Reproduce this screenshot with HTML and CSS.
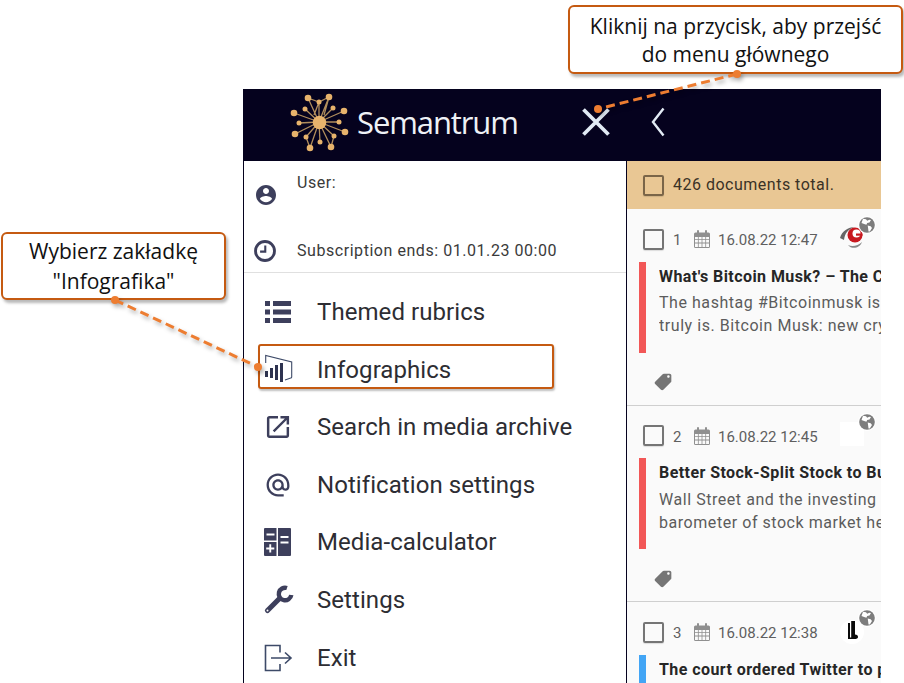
FILE: index.html
```html
<!DOCTYPE html>
<html lang="en">
<head>
<meta charset="utf-8">
<title>Semantrum</title>
<link rel="stylesheet" href="styles.css">
</head>
<body>
<svg width="0" height="0" class="defs">
  <defs>
    <symbol id="cal" viewBox="0 0 16 18">
      <path fill="#8f8f8f" d="M1.500 2.500H3V1a1 1 0 0 1 2 0v1.500h6V1a1 1 0 0 1 2 0v1.500h1.500A1.500 1.500 0 0 1 16 4v12.500a1.500 1.500 0 0 1-1.500 1.500h-13A1.500 1.500 0 0 1 0 16.500V4a1.500 1.500 0 0 1 1.500-1.500zM1 7v2.300h2.900V7zm3.700 0v2.300h2.900V7zm3.700 0v2.300h2.900V7zm3.700 0v2.300H15V7zM1 10.100v2.500h2.900v-2.500zm3.700 0v2.500h2.900v-2.500zm3.700 0v2.500h2.900v-2.500zm3.700 0v2.500H15v-2.500zM1 13.400V17h2.900v-3.600zm3.700 0V17h2.900v-3.600zm3.700 0V17h2.900v-3.600zm3.700 0V17H15v-3.600z"/>
    </symbol>
    <symbol id="tag" viewBox="0 0 24 24">
      <path fill="#757575" transform="matrix(-1 0 0 1 24 0)" d="M21.410 11.580l-9-9C12.050 2.220 11.550 2 11 2H4c-1.100 0-2 .9-2 2v7c0 .55.22 1.050.59 1.420l9 9c.36.36.86.58 1.410.58.55 0 1.050-.22 1.410-.59l7-7c.37-.36.59-.86.59-1.410 0-.55-.23-1.060-.59-1.420zM5.500 7C4.670 7 4 6.330 4 5.500S4.670 4 5.500 4 7 4.670 7 5.500 6.330 7 5.500 7z"/>
    </symbol>
    <symbol id="globe" viewBox="0 0 18 18">
      <circle cx="9" cy="9" r="9" fill="#fff"/>
      <circle cx="9" cy="9" r="7.800" fill="#7d7d7d"/>
      <path fill="#fff" d="M5 2.800l3 .4 1.200 1.500 2-.9 1.800.2-1.500 2.400-2.300.6-.8 1.800-2.300-.9L3.500 7zM9.700 9.500l3 .8 1.300 1.800-2.200 3.300-1.300.1-.4-3.200z"/>
    </symbol>
  </defs>
</svg>

<div class="app">
  <header class="topbar">
    <div class="brand">
      <svg class="logo" viewBox="0 0 80 75" width="80" height="75">
        <g stroke="#b08d5c" stroke-width="1.300" fill="none">
          <path d="M39 37L28 13M39 37L49 12M39 37L64 26M39 37L65 47M39 37L51 62M39 37L30 63M39 37L15 49M39 37L14 28M39 37L39 17M39 37L25 24M39 37L53 23M39 37L59 37M39 37L54 51M39 37L40 57M39 37L26 52M39 37L19 38M28 13L39 17L49 12M39 17L34 30M49 12L44 30M54 51L51 62M26 52L30 63"/>
        </g>
        <g fill="#e7b36c">
          <circle cx="28" cy="13" r="3.300"/><circle cx="49" cy="12" r="3.300"/><circle cx="64" cy="26" r="3.300"/><circle cx="65" cy="47" r="3.300"/><circle cx="51" cy="62" r="3.300"/><circle cx="30" cy="63" r="3.300"/><circle cx="15" cy="49" r="3.300"/><circle cx="14" cy="28" r="3.300"/>
          <circle cx="39" cy="17" r="2.500"/><circle cx="25" cy="24" r="2.500"/><circle cx="53" cy="23" r="2.500"/><circle cx="59" cy="37" r="2.500"/><circle cx="54" cy="51" r="2.500"/><circle cx="40" cy="57" r="2.500"/><circle cx="26" cy="52" r="2.500"/><circle cx="19" cy="38" r="2.500"/>
          <circle cx="39.500" cy="37.500" r="6.800"/>
        </g>
      </svg>
      <span class="brand-name">Semantrum</span>
      <svg class="close" viewBox="0 0 28 28" width="28" height="28"><path d="M1.500 1.500l25 25M26.500 1.500l-25 25" stroke="#e2ebf5" stroke-width="3.800" fill="none"/></svg>
    </div>
    <svg class="back" viewBox="0 0 14 30" width="14" height="30"><path d="M12.500 1.500L2 15l10.500 13.500" stroke="#e2ebf5" stroke-width="2.400" fill="none"/></svg>
  </header>

  <div class="body">
    <aside class="side">
      <section class="account">
        <div class="acc-row acc-user">
          <svg class="acc-icon acc-person" viewBox="0 0 24 24" width="24" height="24"><path fill="#3d3f5c" d="M12 2C6.480 2 2 6.480 2 12s4.480 10 10 10 10-4.480 10-10S17.520 2 12 2zm0 3c1.660 0 3 1.340 3 3s-1.340 3-3 3-3-1.340-3-3 1.340-3 3-3zm0 14.200c-2.500 0-4.710-1.280-6-3.220.03-1.990 4-3.080 6-3.080 1.990 0 5.970 1.090 6 3.080-1.290 1.940-3.500 3.220-6 3.220z"/></svg>
          <span class="acc-text">User:</span>
        </div>
        <div class="acc-row acc-sub">
          <svg class="acc-icon" viewBox="1 1 22 22" width="24" height="24"><circle cx="12" cy="12" r="8.700" fill="none" stroke="#3d3f5c" stroke-width="2.600"/><path fill="#3d3f5c" d="M11.300 7h1.900v6.500H7.500v-1.900h3.800z"/></svg>
          <span class="acc-text">Subscription ends: 01.01.23 00:00</span>
        </div>
      </section>
      <nav class="menu">
        <a class="item">
          <svg class="ico" viewBox="0 0 32 32" width="32" height="32"><path fill="#3d3f5c" d="M3 5h5v5H3zM11 5h18v5H11zM3 13.500h5v5H3zM11 13.500h18v5H11zM3 22h5v5H3zM11 22h18v5H11z"/></svg>
          <span>Themed rubrics</span>
        </a>
        <a class="item">
          <svg class="ico" viewBox="0 0 32 32" width="32" height="32">
            <path d="M3.700 9V1.500L29.700 8v15a1 1 0 0 1-1 1L23 26" stroke="#3d4a68" stroke-width="1.100" fill="none"/>
            <path fill="#2e3350" d="M3 17h3v6H3zM8 14h3v10H8zM13 11h3v15h-3zM18 9h3v19h-3z"/>
          </svg>
          <span>Infographics</span>
        </a>
        <a class="item">
          <svg class="ico" viewBox="-1 -1 26 26" width="32" height="32"><path fill="#3d3f5c" d="M19 19H5V5h7V3H5c-1.110 0-2 .9-2 2v14c0 1.100.89 2 2 2h14c1.100 0 2-.9 2-2v-7h-2v7zM14 3v2h3.590l-9.830 9.830 1.410 1.410L19 6.410V10h2V3h-7z"/></svg>
          <span>Search in media archive</span>
        </a>
        <a class="item">
          <svg class="ico" viewBox="-2 -2 28 28" width="32" height="32"><path fill="#3d3f5c" d="M12 2C6.480 2 2 6.480 2 12s4.480 10 10 10h5v-2h-5c-4.340 0-8-3.660-8-8s3.660-8 8-8 8 3.660 8 8v1.430c0 .79-.71 1.570-1.500 1.570s-1.500-.78-1.500-1.570V12c0-2.760-2.240-5-5-5s-5 2.240-5 5 2.240 5 5 5c1.380 0 2.640-.56 3.540-1.470.65.89 1.770 1.470 2.960 1.470 1.970 0 3.500-1.600 3.500-3.570V12c0-5.520-4.480-10-10-10zm0 13c-1.660 0-3-1.340-3-3s1.340-3 3-3 3 1.340 3 3-1.340 3-3 3z"/></svg>
          <span>Notification settings</span>
        </a>
        <a class="item">
          <svg class="ico" viewBox="0 0 32 32" width="32" height="32"><path fill="#3d3f5c" fill-rule="evenodd" d="M3 2h11.500v12.500H2V3a1 1 0 0 1 1-1zM4.500 7.500v1.900h8V7.500zM2 16h12.500v14H3a1 1 0 0 1-1-1zM7.300 18.300v3.200H4.200v1.900h3.100v3.200h1.900v-3.200h3.100v-1.900H9.200v-3.200zM16 2h12a1 1 0 0 1 1 1v26a1 1 0 0 1-1 1H16zM18.500 10v1.900h8V10zM18.500 15.500v1.900h8v-1.900z"/></svg>
          <span>Media-calculator</span>
        </a>
        <a class="item">
          <svg class="ico" viewBox="0 0 32 32" width="32" height="32"><path d="M25 4A6.300 6.300 0 1 0 29.300 11" stroke="#3d3f5c" stroke-width="4.400" fill="none"/><path d="M5.500 26.500L17.500 14.500" stroke="#3d3f5c" stroke-width="5.200" stroke-linecap="round" fill="none"/><circle cx="5.500" cy="26.500" r="1" fill="#fff"/></svg>
          <span>Settings</span>
        </a>
        <a class="item">
          <svg class="ico" viewBox="0 0 32 32" width="32" height="32"><path d="M18 10.500V3.500H3.500v25H18V22M9 16h19M23 10.500l6 5.500-6 5.500" stroke="#3d4a68" stroke-width="1.600" fill="none"/></svg>
          <span>Exit</span>
        </a>
      </nav>
    </aside>

    <main class="list">
      <div class="total"><span class="check check-total"></span><span class="total-text">426 documents total.</span></div>

      <article class="doc">
        <svg class="globe"><use href="#globe"/></svg>
        <svg class="src" viewBox="0 0 26 26" width="26" height="26">
          <path d="M0 13C2 6 8 2 15 2 8 4 5 8 4 15z" fill="#666"/>
          <circle cx="15" cy="10" r="7.500" fill="#c8181f"/>
          <circle cx="16.500" cy="8.500" r="4" fill="#fff"/>
          <path d="M16 8.500h6.500v2.200H16z" fill="#c8181f"/>
          <path d="M8 20c4 2 10 1 14-3-2 6-10 8-14 3z" fill="#888"/>
        </svg>
        <div class="doc-head"><span class="check"></span><span class="num">1</span><svg class="cal"><use href="#cal"/></svg><span class="date">16.08.22 12:47</span></div>
        <div class="doc-main">
          <div class="bar bar-red"></div>
          <div class="doc-text">
            <h3 class="title">What's Bitcoin Musk? – The Coin Everyone Talks About</h3>
            <p class="line">The hashtag #Bitcoinmusk is trending and nobody knows what it</p>
            <p class="line">truly is. Bitcoin Musk: new crypto or just a meme?</p>
          </div>
        </div>
        <svg class="tag"><use href="#tag"/></svg>
      </article>

      <article class="doc">
        <svg class="globe"><use href="#globe"/></svg>
        <div class="src src-blank"></div>
        <div class="doc-head"><span class="check"></span><span class="num">2</span><svg class="cal"><use href="#cal"/></svg><span class="date">16.08.22 12:45</span></div>
        <div class="doc-main">
          <div class="bar bar-red"></div>
          <div class="doc-text">
            <h3 class="title">Better Stock-Split Stock to Buy Right Now</h3>
            <p class="line">Wall Street and the investing community treat the S&amp;P 500 as a</p>
            <p class="line">barometer of stock market health and direction of the economy</p>
          </div>
        </div>
        <svg class="tag"><use href="#tag"/></svg>
      </article>

      <article class="doc">
        <svg class="globe"><use href="#globe"/></svg>
        <svg class="src" viewBox="0 0 26 26" width="26" height="26">
          <circle cx="12" cy="14" r="12" fill="#fff"/>
          <path d="M8 5h2v15H8zM11.200 3H15v13.500c2 0 3 1 3 2.400S16.500 21 14.500 21H8v-1.500h3.200z" fill="#0a0a0a"/>
        </svg>
        <div class="doc-head"><span class="check"></span><span class="num">3</span><svg class="cal"><use href="#cal"/></svg><span class="date">16.08.22 12:38</span></div>
        <div class="doc-main">
          <div class="bar bar-blue"></div>
          <div class="doc-text">
            <h3 class="title">The court ordered Twitter to provide documents</h3>
          </div>
        </div>
      </article>
    </main>
  </div>
</div>

<div class="callout callout-top">Kliknij na przycisk, aby przejść<br>do menu głównego</div>
<div class="callout callout-left">Wybierz zakładkę<br>"Infografika"</div>
<div class="highlight"></div>
<svg class="connectors" viewBox="0 0 904 683" width="904" height="683">
  <g class="conn">
    <path d="M737 74L598 109" />
    <path d="M115 300L258 367" />
  </g>
  <g class="dots">
    <circle cx="737" cy="74" r="4"/><circle cx="598" cy="109" r="4"/>
    <circle cx="115" cy="300" r="4"/><circle cx="258" cy="367" r="4"/>
  </g>
</svg>
</body>
</html>
```
FILE: styles.css
```css
* { box-sizing: border-box; }
html, body { margin: 0; padding: 0; }
body {
  width: 904px;
  height: 683px;
  overflow: hidden;
  background: #fff;
  padding: 89px 0 0 243px;
  position: relative;
  font-family: Roboto, "Liberation Sans", sans-serif;
}
.defs { position: absolute; }

.app { width: 638px; height: 594px; display: flex; flex-direction: column; }

.topbar {
  height: 72px;
  flex: none;
  background: #05021e;
  display: flex;
  align-items: center;
  padding-bottom: 6px;
}
.brand { width: 384px; display: flex; align-items: center; padding-left: 37px; }
.logo { flex: none; }
.brand-name {
  font-family: "Open Sans", "Noto Sans", sans-serif;
  font-size: 31px;
  font-weight: 500;
  line-height: 40px;
  color: #eef1f6;
  margin-left: -3px;
  letter-spacing: -1.1px;
}
.close { margin-left: 64px; flex: none; }
.back { margin-left: 24px; flex: none; }

.body { flex: 1; display: flex; min-height: 0; }

.side {
  width: 384px;
  flex: none;
  border-left: 1px solid #05021e;
  border-right: 1px solid #05021e;
  background: #fff;
  overflow: hidden;
}
.account { height: 112px; border-bottom: 1px solid #e0e0e0; }
.acc-row { display: flex; color: #3a3a3a; font-size: 16px; letter-spacing: .55px; padding-left: 9px; }
.acc-icon { flex: none; }
.acc-person { margin-left: 1px; margin-right: -1px; }
.acc-text { margin-left: 20px; }
.acc-user { height: 68px; align-items: center; }
.acc-user .acc-text { align-self: flex-start; margin-top: 12px; line-height: 20px; }
.acc-sub { height: 43px; align-items: center; }

.menu { padding: 10.2px 0 0 18px; }
.item {
  height: 57.6px;
  display: flex;
  align-items: center;
  gap: 23px;
  font-size: 24px;
  letter-spacing: .07px;
  color: #2d2d33;
}
.ico { flex: none; }

.list { width: 254px; flex: none; overflow: hidden; background: #fafafa; }
.total {
  height: 48px;
  background: #e9c794;
  display: flex;
  align-items: center;
  padding-left: 16px;
  gap: 9px;
  font-size: 16px;
  letter-spacing: .5px;
  color: #3a3226;
}
.total-text { position: relative; top: -1px; }
.check {
  width: 21px;
  height: 21px;
  flex: none;
  border: 2px solid #757575;
  border-radius: 2px;
  box-shadow: 0 1px 1px rgba(0,0,0,.12);
}
.check-total { border-color: #7a6548; }

.doc {
  height: 196.5px;
  padding-top: 18px;
  border-bottom: 1px solid #cfcfcf;
  position: relative;
}
.doc-head { height: 24px; display: flex; align-items: center; padding-left: 16px; color: #5f5f5f; font-size: 15px; }
.num { margin-left: 9px; width: 12px; padding-top: 2px; }
.cal { width: 16px; height: 18px; margin-left: 9px; flex: none; }
.date { margin-left: 8px; padding-top: 2px; }
.globe { position: absolute; left: 231px; top: 7px; width: 18px; height: 18px; z-index: 1; }
.src { position: absolute; left: 213px; top: 16px; }
.src-blank { width: 24px; height: 24px; background: #fff; }

.doc-main { display: flex; margin-top: 10.9px; padding-left: 12px; height: 91px; }
.bar { width: 7px; flex: none; }
.bar-red { background: #f25757; }
.bar-blue { background: #42a5f5; }
.doc-text { margin-left: 13px; min-width: 0; flex: 1; white-space: nowrap; overflow: hidden; padding-top: 3px; }
.title { margin: 0 0 2.2px; font-size: 16px; line-height: 24px; font-weight: 700; letter-spacing: .43px; color: #262626; }
.line { margin: 0; font-size: 16px; line-height: 23px; letter-spacing: .55px; color: #5c5c5c; }
.tag { display: block; width: 20px; height: 20px; margin: 19.6px 0 0 26px; }

.callout {
  position: absolute;
  background: #fff;
  border: 2px solid #c55a11;
  border-radius: 6px;
  box-shadow: 2px 3px 3px rgba(0,0,0,.28);
  font-family: "Open Sans", "Noto Sans", sans-serif;
  font-size: 21px;
  text-align: center;
  color: #111;
  display: flex;
  align-items: center;
  justify-content: center;
}
.callout-top { left: 568px; top: 5px; width: 335px; height: 69px; line-height: 28px; }
.callout-left { left: 1px; top: 232px; width: 225px; height: 68px; line-height: 30px; }
.highlight {
  position: absolute;
  left: 258px;
  top: 344px;
  width: 296px;
  height: 45px;
  border: 2px solid #c55a11;
  border-radius: 3px;
  box-shadow: 1px 2px 2px rgba(0,0,0,.25);
}
.connectors { position: absolute; left: 0; top: 0; pointer-events: none; filter: drop-shadow(2px 3px 2px rgba(0,0,0,.3)); }
.conn path { stroke: #ed7d31; stroke-width: 3; stroke-dasharray: 9 5; fill: none; }
.dots circle { fill: #ed7d31; }
```
